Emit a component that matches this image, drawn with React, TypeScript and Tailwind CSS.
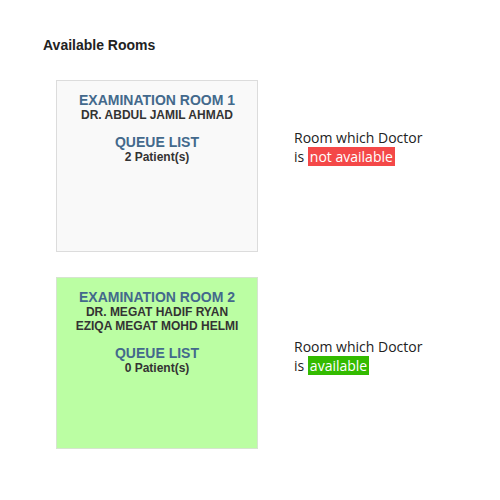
const rooms = [
  {
    name: 'EXAMINATION ROOM 1',
    doctor: ['DR. ABDUL JAMIL AHMAD'],
    patients: 2,
    available: false,
  },
  {
    name: 'EXAMINATION ROOM 2',
    doctor: ['DR. MEGAT HADIF RYAN', 'EZIQA MEGAT MOHD HELMI'],
    patients: 0,
    available: true,
  },
];

function RoomCard({ name, doctor, patients, available }: (typeof rooms)[number]) {
  return (
    <div
      className={`flex h-[172px] w-[202px] flex-col items-center border pt-[11px] text-center font-['Liberation_Sans',Arial,sans-serif] font-bold ${
        available ? 'border-[#d6e4d0] bg-[#bbfea3]' : 'border-[#dcdcdc] bg-[#f9f9f9]'
      }`}
    >
      <div className="text-[14px] leading-[16px] text-[#43698c]">{name}</div>
      {doctor.map((line, i) => (
        <div key={`doctor-${i}`} className="text-[12px] leading-[14px] text-[#333]">
          {line}
        </div>
      ))}
      <div className="mt-[12px] text-[14px] leading-[16px] text-[#43698c]">QUEUE LIST</div>
      <div className="text-[12px] leading-[14px] text-[#333]">{patients} Patient(s)</div>
    </div>
  );
}

export default function App() {
  return (
    <div className="h-[500px] w-[500px] bg-white px-[43px] pt-[37px]">
      <h3 className="font-['Liberation_Sans',Arial,sans-serif] text-[14px] font-bold leading-[16px] text-[#222]">
        Available Rooms
      </h3>
      <div className="mt-[27px] flex flex-col gap-[25px] pl-[13px]">
        {rooms.map((room, key) => (
          <div key={`room-${key}`} className="flex items-start">
            <RoomCard {...room} />
            <div
              className={`ml-[36px] font-['Open_Sans',sans-serif] text-[14px] leading-[19px] text-[#222] ${
                room.available ? 'mt-[60px]' : 'mt-[48px]'
              }`}
            >
              Room which Doctor
              <br />
              is{' '}
              <span
                className={`px-[2px] text-white ${room.available ? 'bg-[#33bb00]' : 'bg-[#f44848]'}`}
              >
                {room.available ? 'available' : 'not available'}
              </span>
            </div>
          </div>
        ))}
      </div>
    </div>
  );
}
